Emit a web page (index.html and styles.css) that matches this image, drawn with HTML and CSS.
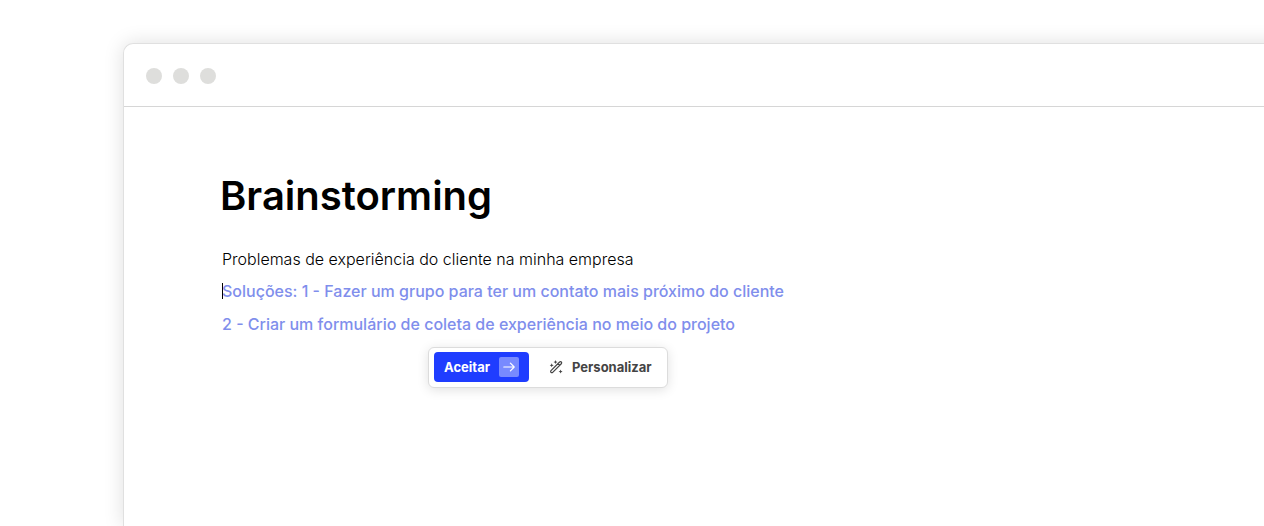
FILE: index.html
```html
<!DOCTYPE html>
<html lang="pt-BR">
<head>
<meta charset="utf-8">
<meta name="viewport" content="width=device-width, initial-scale=1">
<title>Brainstorming</title>
<link rel="stylesheet" href="styles.css">
</head>
<body>
<main class="window">
  <header class="window-bar">
    <span class="dot"></span><span class="dot"></span><span class="dot"></span>
  </header>
  <article class="document">
    <h1 class="title">Brainstorming</h1>
    <p class="prompt">Problemas de experiência do cliente na minha empresa</p>
    <p class="suggestion caret">Soluções: 1 - Fazer um grupo para ter um contato mais próximo do cliente</p>
    <p class="suggestion">2 - Criar um formulário de coleta de experiência no meio do projeto</p>
    <div class="toolbar">
      <button class="accept" type="button">Aceitar
        <span class="key"><svg width="12" height="10" viewBox="0 0 12 10" fill="none" stroke="currentColor" stroke-width="1.2" stroke-linecap="round" stroke-linejoin="round" aria-hidden="true"><path d="M.8 5h10.4M7.4 1.2 11.2 5 7.4 8.8"/></svg></span>
      </button>
      <button class="customize" type="button">
        <svg width="14" height="14" viewBox="0 0 14 14" fill="none" stroke="currentColor" stroke-width="1.2" stroke-linejoin="round" aria-hidden="true">
          <path d="M2 10.6 10.6 2a1.2 1.2 0 0 1 1.7 0 1.2 1.2 0 0 1 0 1.7L3.7 12.3a1.2 1.2 0 0 1-1.7 0 1.2 1.2 0 0 1 0-1.7zM8.9 3.7l1.7 1.7"/>
          <path fill="currentColor" stroke="none" d="m2.7 3.3.6 1.4 1.4.6-1.4.6-.6 1.4-.6-1.4-1.4-.6 1.4-.6zM6.5.1l.6 1.4 1.4.6-1.4.6-.6 1.4-.6-1.4-1.4-.6 1.4-.6zM11.6 9.6l.6 1.4 1.4.6-1.4.6-.6 1.4-.6-1.4-1.4-.6 1.4-.6z"/>
        </svg>
        Personalizar
      </button>
    </div>
  </article>
</main>
</body>
</html>
```

FILE: styles.css
```css
* {
  box-sizing: border-box;
}

body {
  margin: 0;
  padding: 43px 0 0 123px;
  background: #fff;
  color: #000;
  font-family: Inter, "Liberation Sans", sans-serif;
  overflow: hidden;
}

.window {
  min-height: calc(100vh - 43px);
  margin-right: -24px;
  border: 1px solid #e0e0e0;
  border-width: 1px 0 0 1px;
  border-radius: 10px 0 0 0;
  background: #fff;
  box-shadow: 0 0 20px rgba(0, 0, 0, 0.13);
}

.window-bar {
  display: flex;
  align-items: center;
  gap: 11px;
  height: 63px;
  padding: 1px 0 0 22px;
  border-bottom: 1px solid #d6d6d6;
}

.dot {
  width: 16px;
  height: 16px;
  border-radius: 50%;
  background: #dededc;
}

.document {
  display: flex;
  flex-direction: column;
  align-items: flex-start;
  padding: 64px 48px 24px 98px;
}

.title {
  margin: 0 0 22px -2px;
  font-size: 40px;
  font-weight: 600;
  line-height: 50px;
}

.prompt,
.suggestion {
  margin: 0;
  font-size: 16px;
  line-height: 32px;
}

.prompt {
  font-weight: 300;
}

.suggestion {
  color: #808eec;
  font-weight: 500;
  line-height: 33px;
}

.caret {
  position: relative;
}

.caret::before {
  content: "";
  position: absolute;
  top: 8px;
  left: 0;
  width: 1px;
  height: 16px;
  background: #000;
}

.toolbar {
  display: flex;
  align-items: center;
  gap: 10px;
  height: 41px;
  margin: 6px 0 0 206px;
  padding: 0 5px 1px;
  border: 1px solid #dcdcdc;
  border-radius: 6px;
  background: #fff;
  box-shadow: 0 2px 12px rgba(0, 0, 0, 0.12);
}

.toolbar button {
  display: flex;
  align-items: center;
  gap: 9px;
  height: 30px;
  padding: 0 10px;
  border: 0;
  border-radius: 4px;
  background: transparent;
  color: #444;
  font: 700 13px/20px Inter, "Liberation Sans", sans-serif;
}

.toolbar .accept {
  background: #1f3dff;
  color: #fff;
}

.key {
  display: flex;
  align-items: center;
  justify-content: center;
  width: 20px;
  height: 20px;
  border-radius: 2px;
  background: #788aff;
}
```
